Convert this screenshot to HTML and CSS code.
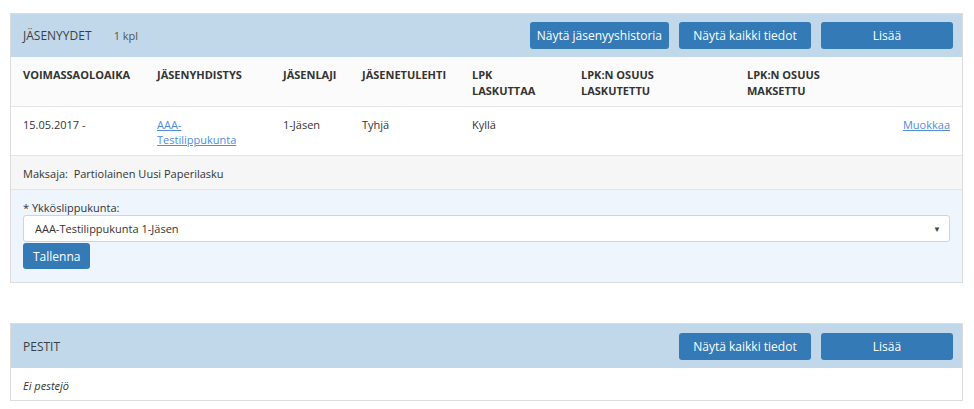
FILE: index.html
```html
<!DOCTYPE html>
<html lang="fi">
<head>
    <meta charset="UTF-8">
    <title>Jäsenyydet</title>
    <link rel="stylesheet" href="styles.css">
</head>
<body>
    <div class="panel">
        <div class="panel-heading">
            <div class="panel-title">JÄSENYYDET <span class="count">1 kpl</span></div>
            <div class="actions">
                <button class="btn">Näytä jäsenyyshistoria</button>
                <button class="btn">Näytä kaikki tiedot</button>
                <button class="btn">Lisää</button>
            </div>
        </div>

        <div class="row head-row">
            <div>VOIMASSAOLOAIKA</div>
            <div>JÄSENYHDISTYS</div>
            <div>JÄSENLAJI</div>
            <div>JÄSENETULEHTI</div>
            <div>LPK<br>LASKUTTAA</div>
            <div>LPK:N OSUUS<br>LASKUTETTU</div>
            <div>LPK:N OSUUS<br>MAKSETTU</div>
            <div></div>
        </div>

        <div class="row data-row">
            <div>15.05.2017 -</div>
            <div><a href="#">AAA-<br>Testilippukunta</a></div>
            <div>1-Jäsen</div>
            <div>Tyhjä</div>
            <div>Kyllä</div>
            <div></div>
            <div></div>
            <div class="right"><a href="#">Muokkaa</a></div>
        </div>

        <div class="payer">Maksaja:&nbsp; Partiolainen Uusi Paperilasku</div>

        <div class="edit-form">
            <label class="field-label">* Ykköslippukunta:</label>
            <div class="select">
                <span>AAA-Testilippukunta 1-Jäsen</span>
                <span class="caret">▼</span>
            </div>
            <button class="btn btn-small">Tallenna</button>
        </div>
    </div>

    <div class="panel panel-second">
        <div class="panel-heading">
            <div class="panel-title">PESTIT</div>
            <div class="actions">
                <button class="btn">Näytä kaikki tiedot</button>
                <button class="btn">Lisää</button>
            </div>
        </div>
        <div class="empty">Ei pestejö</div>
    </div>
</body>
</html>
```

FILE: styles.css
```css
body {
    margin: 0;
    padding: 13px 0 0 10px;
    font-family: "Open Sans", "Liberation Sans", sans-serif;
    font-size: 11px;
    color: #333;
    background: #fff;
}
.panel {
    width: 951px;
    border: 1px solid #dcdcdc;
    background: #fff;
}
.panel-second {
    margin-top: 40px;
}
.panel-heading {
    height: 43px;
    display: flex;
    align-items: center;
    justify-content: space-between;
    padding: 0 9px 0 12px;
    background-color: #c1d8ea;
}
.panel-second .panel-heading {
    height: 44px;
}
.panel-title {
    font-size: 12px;
    color: #3a3f44;
}
.count {
    font-size: 11px;
    margin-left: 19px;
    color: #555;
}
.actions {
    display: flex;
    gap: 10px;
}
.btn {
    min-width: 132px;
    height: 27px;
    padding: 0 7px;
    border: none;
    border-radius: 3px;
    background-color: #337ab7;
    color: #fff;
    font-family: inherit;
    font-size: 12px;
    cursor: pointer;
}
.row {
    display: grid;
    grid-template-columns: 134px 126px 79px 110px 109px 166px 1fr 0px;
    padding: 0 12px;
    line-height: 16px;
    border-bottom: 1px solid #e4e4e4;
}
.head-row {
    padding-top: 10px;
    padding-bottom: 7px;
    background: #fbfbfb;
    font-weight: bold;
    color: #333;
}
.data-row {
    grid-template-columns: 134px 126px 79px 110px 109px 166px 0px 1fr;
    padding-top: 10px;
    padding-bottom: 8px;
    line-height: 15px;
}
.right {
    text-align: right;
}
a {
    color: #4f8ddb;
}
.payer {
    padding: 10px 12px 8px;
    line-height: 15px;
    background: #f6f6f6;
    border-bottom: 1px solid #e4e4e4;
}
.edit-form {
    padding: 10px 12px 13px;
    background: #eef5fc;
}
.field-label {
    display: block;
    line-height: 15px;
}
.select {
    height: 25px;
    display: flex;
    align-items: center;
    justify-content: space-between;
    padding: 0 8px 0 11px;
    background: #fff;
    border: 1px solid #cfd4d9;
    border-radius: 3px;
}
.caret {
    font-size: 8px;
    color: #444;
}
.btn-small {
    min-width: 0;
    height: 26px;
    margin-top: 1px;
    padding: 0 10px;
}
.empty {
    padding: 10px 12px 7px;
    line-height: 15px;
    font-style: italic;
}
```
